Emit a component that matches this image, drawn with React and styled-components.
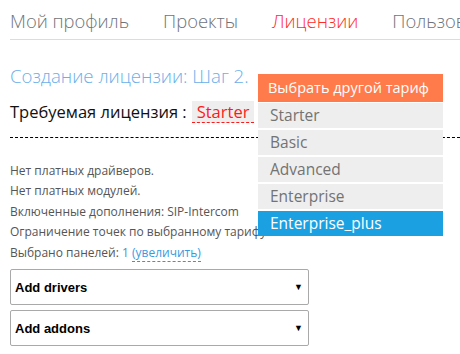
import styled, { createGlobalStyle } from "styled-components";

const Global = createGlobalStyle`
  html, body { margin: 0; padding: 0; background: #fff; }
  body {
    width: 460px;
    height: 354px;
    overflow: hidden;
    font-family: "Open Sans", "Noto Sans", sans-serif;
  }
`;

const Page = styled.div`
  position: relative;
  padding-left: 10px;
  width: 450px;
`;

const Nav = styled.nav`
  display: flex;
  gap: 34px;
  height: 39px;
  align-items: flex-end;
  border-bottom: 1px solid #dcdcdc;
  white-space: nowrap;
  overflow: hidden;
`;

const NavItem = styled.a`
  font-family: "Open Sans", sans-serif;
  font-weight: 300;
  font-size: 18.4px;
  line-height: 30px;
  padding-bottom: 3px;
  color: ${(p) => (p.$active ? "#ff2a2a" : "#6f7379")};
  text-decoration: none;
`;

const Title = styled.h2`
  margin: 24px 0 0;
  font-weight: 300;
  font-size: 18.6px;
  line-height: 24px;
  color: #6ab0ea;
`;

const LicenseRow = styled.div`
  display: flex;
  align-items: center;
  gap: 5px;
  margin-top: 12px;
  padding-bottom: 14px;
  border-bottom: 1px dashed #000;
  font-size: 16.5px;
  color: #111;
`;

const CurrentPlan = styled.span`
  background: #eeeeee;
  color: #ff1a1a;
  padding: 0 5px;
  line-height: 21px;
  border-bottom: 1px dashed #ff1a1a;
`;

const Info = styled.div`
  margin-top: 23px;
  font-size: 12px;
  line-height: 20.4px;
  color: #555;
`;

const Link = styled.a`
  color: #3a9ae0;
  text-decoration: none;
  border-bottom: 1px dashed #1ba1e2;
`;

const Number = styled.span`
  color: #5a8cc0;
`;

const Selects = styled.div`
  display: flex;
  flex-direction: column;
  gap: 5px;
  margin-top: 6px;
  width: 299px;
`;

const Select = styled.div`
  display: flex;
  align-items: center;
  justify-content: space-between;
  height: 34px;
  padding: 0 5px 0 4px;
  border: 1px solid #a9a9a9;
  border-radius: 2px;
  font-family: "Liberation Sans", Arial, sans-serif;
  font-weight: bold;
  font-size: 13px;
  color: #000;
`;

const Arrow = styled.span`
  font-size: 9px;
`;

const Menu = styled.ul`
  position: absolute;
  left: 258px;
  top: 74px;
  width: 185px;
  margin: 0;
  padding: 0;
  list-style: none;
  display: flex;
  flex-direction: column;
  gap: 2px;
  font-size: 15.5px;
`;

const MenuHeader = styled.li`
  height: 28px;
  line-height: 28px;
  margin-bottom: -1px;
  padding-left: 10px;
  background: #ff7b4b;
  color: #fff;
  font-size: 14.5px;
`;

const MenuItem = styled.li`
  height: 25px;
  line-height: 25px;
  padding-left: 12px;
  background: ${(p) => (p.$selected ? "#1ba1e2" : "#eeeeee")};
  color: ${(p) => (p.$selected ? "#fff" : "#737373")};
`;

const plans = ["Starter", "Basic", "Advanced", "Enterprise", "Enterprise_plus"];

export default function App() {
  return (
    <Page>
      <Global />
      <Nav>
        <NavItem>Мой профиль</NavItem>
        <NavItem>Проекты</NavItem>
        <NavItem $active>Лицензии</NavItem>
        <NavItem>Пользователи</NavItem>
      </Nav>
      <Title>Создание лицензии: Шаг 2.</Title>
      <LicenseRow>
        <span>Требуемая лицензия :</span>
        <CurrentPlan>Starter</CurrentPlan>
      </LicenseRow>
      <Info>
        <div>Нет платных драйверов.</div>
        <div>Нет платных модулей.</div>
        <div>Включенные дополнения: SIP-Intercom</div>
        <div>Ограничение точек по выбранному тарифу: 1</div>
        <div>
          Выбрано панелей: <Number>1</Number> <Link>(увеличить)</Link>
        </div>
      </Info>
      <Selects>
        <Select>
          Add drivers <Arrow>▼</Arrow>
        </Select>
        <Select>
          Add addons <Arrow>▼</Arrow>
        </Select>
      </Selects>
      <Menu>
        <MenuHeader>Выбрать другой тариф</MenuHeader>
        {plans.map((p) => (
          <MenuItem key={p} $selected={p === "Enterprise_plus"}>
            {p}
          </MenuItem>
        ))}
      </Menu>
    </Page>
  );
}
